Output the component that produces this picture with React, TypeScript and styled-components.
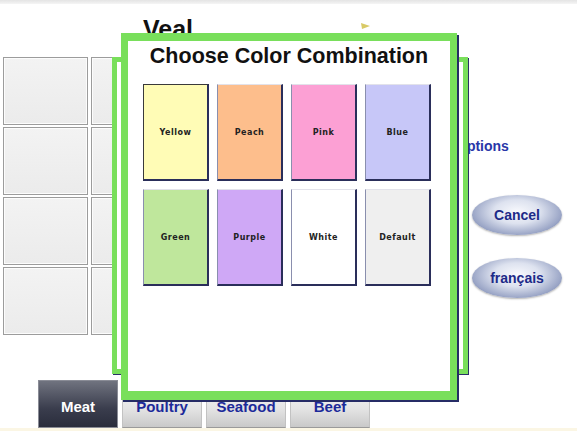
import React from 'react';
import styled, { createGlobalStyle, css } from 'styled-components';

const GlobalStyle = createGlobalStyle`
  html, body {
    margin: 0;
    padding: 0;
    background: #fff;
  }
  body {
    font-family: "Liberation Sans", Arial, sans-serif;
  }
`;

const Screen = styled.div`
  position: relative;
  width: 577px;
  height: 431px;
  overflow: hidden;
  background: #fff;
  display: flex;
  flex-direction: column;
`;

const TopStrip = styled.div`
  height: 4px;
  background: linear-gradient(#e4e4e4, #f5f5f5);
`;

const Header = styled.div`
  height: 53px;
  box-sizing: border-box;
  display: flex;
  align-items: flex-start;
  padding: 13px 0 0 143px;
`;

const PageTitle = styled.div`
  font-size: 25px;
  font-weight: bold;
  line-height: 1;
  color: #111;
`;

const Marker = styled.svg`
  margin: 5px 0 0 168px;
`;

const Main = styled.div`
  display: flex;
  height: 278px;
`;

const ItemGrid = styled.div`
  display: grid;
  grid-template-columns: repeat(4, 85px);
  grid-auto-rows: 68px;
  gap: 2px 3px;
  padding-left: 3px;
`;

const ItemCell = styled.div`
  box-sizing: border-box;
  border: 1px solid #9c9c9c;
  background: linear-gradient(#f3f3f3, #ebebeb);
  box-shadow: inset 0 0 0 1px #fcfcfc;
`;

const SidePanel = styled.div`
  margin-left: auto;
  width: 121px;
  padding-top: 81px;
  display: flex;
  flex-direction: column;
  align-items: flex-start;
`;

const SideLink = styled.div`
  font-size: 14px;
  font-weight: bold;
  line-height: 16px;
  color: #2836a8;
`;

const OvalButton = styled.div<{ $gap: number }>`
  margin: ${({ $gap }) => $gap}px 0 0 16px;
  width: 90px;
  height: 40px;
  border-radius: 50%;
  display: flex;
  align-items: center;
  justify-content: center;
  background: radial-gradient(ellipse at 50% 42%, #f8f9fd 0%, #dde2ef 36%, #9aa5c6 70%, #4f5d8a 100%);
  box-shadow: 0 1px 2px rgba(0, 0, 0, 0.3);
  font-size: 14px;
  font-weight: bold;
  color: #1d2a88;
`;

const TabBar = styled.div`
  margin-top: auto;
  display: flex;
  gap: 4px;
  padding-left: 38px;
  height: 48px;
`;

const Tab = styled.div<{ $active?: boolean }>`
  width: 80px;
  box-sizing: border-box;
  padding-top: 4px;
  display: flex;
  align-items: center;
  justify-content: center;
  font-size: 15px;
  font-weight: bold;
  ${({ $active }) => $active
    ? css`
      background: linear-gradient(#70737f, #3a3d4d 60%, #2a2d3c);
      border: 1px solid #8a8c96;
      color: #fff;
    `
    : css`
      background: linear-gradient(#fbfbfb, #e4e4e4 60%, #c9c9c9);
      border: 1px solid #c2c2c2;
      border-bottom-color: #9a9a9a;
      color: #1c2a9a;
    `}
`;

const BottomStrip = styled.div`
  height: 3px;
  background: #fbf6e4;
`;

const BackFrame = styled.div`
  position: absolute;
  left: 112px;
  top: 57px;
  width: 356px;
  height: 317px;
  box-sizing: border-box;
  border: 5px solid #79df5b;
  background: #fff;
  box-shadow: 1px 1px 0 #2a3068;
`;

const Dialog = styled.div`
  position: absolute;
  left: 121px;
  top: 33px;
  width: 336px;
  height: 367px;
  box-sizing: border-box;
  border: 7px solid #79df5b;
  border-top-width: 8px;
  border-bottom-width: 9px;
  background: #fff;
  box-shadow: 2px 2px 0 #262c66;
  display: flex;
  flex-direction: column;
`;

const DialogTitle = styled.div`
  margin-top: 3px;
  text-align: center;
  font-size: 21.5px;
  font-weight: bold;
  line-height: 24px;
  color: #111;
`;

const SwatchGrid = styled.div`
  margin: 16px 0 0 15px;
  display: grid;
  grid-template-columns: repeat(4, 66px);
  grid-auto-rows: 97px;
  gap: 8px 8px;
`;

const Swatch = styled.div<{ $color: string; $selected?: boolean }>`
  box-sizing: border-box;
  background: ${({ $color }) => $color};
  border-top: 1px solid ${({ $selected }) => $selected ? '#3a3a3a' : '#e2e2ea'};
  border-left: 1px solid ${({ $selected }) => $selected ? '#3a3a3a' : '#8a8fae'};
  border-right: 2px solid #2a2e5a;
  border-bottom: 2px solid #2a2e5a;
  display: flex;
  align-items: center;
  justify-content: center;
  font-family: "DejaVu Sans", Verdana, sans-serif;
  font-size: 8px;
  font-weight: bold;
  letter-spacing: 0.5px;
  color: #222;
`;

const swatches = [
  { name: 'Yellow', color: '#fffcb6', selected: true },
  { name: 'Peach', color: '#fdbe8c' },
  { name: 'Pink', color: '#fca0d4' },
  { name: 'Blue', color: '#c7c7f8' },
  { name: 'Green', color: '#bfe79c' },
  { name: 'Purple', color: '#cfa8f6' },
  { name: 'White', color: '#ffffff' },
  { name: 'Default', color: '#efefef' },
];

const tabs = ['Meat', 'Poultry', 'Seafood', 'Beef'];

const App = () => (
  <>
    <GlobalStyle />
    <Screen>
      <TopStrip />
      <Header>
        <PageTitle>Veal</PageTitle>
        <Marker width="9" height="8" viewBox="0 0 9 8">
          <polygon points="0,1 9,4 1,7" fill="#d9ca66" />
        </Marker>
      </Header>
      <Main>
        <ItemGrid>
          {Array.from({ length: 16 }).map((_, i) => <ItemCell key={i} />)}
        </ItemGrid>
        <SidePanel>
          <SideLink>Options</SideLink>
          <OvalButton $gap={41}>Cancel</OvalButton>
          <OvalButton $gap={23}>français</OvalButton>
        </SidePanel>
      </Main>
      <TabBar>
        {tabs.map((t, i) => <Tab key={t} $active={i === 0}>{t}</Tab>)}
      </TabBar>
      <BottomStrip />

      <BackFrame />
      <Dialog>
        <DialogTitle>Choose Color Combination</DialogTitle>
        <SwatchGrid>
          {swatches.map(s => (
            <Swatch key={s.name} $color={s.color} $selected={s.selected}>{s.name}</Swatch>
          ))}
        </SwatchGrid>
      </Dialog>
    </Screen>
  </>
);

export default App;
